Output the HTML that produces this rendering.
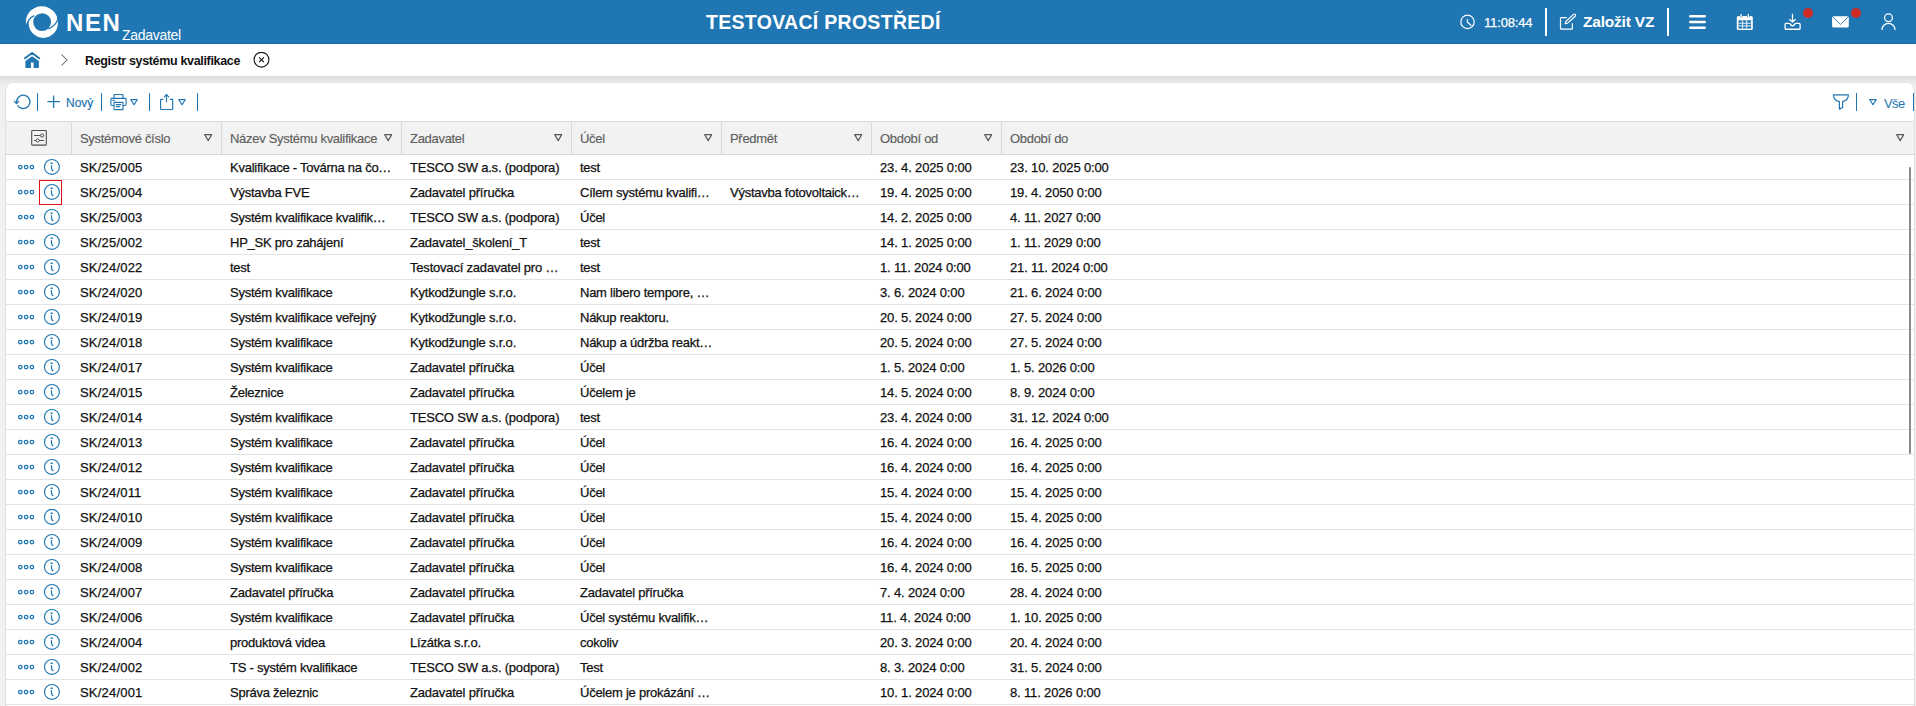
<!DOCTYPE html>
<html><head><meta charset="utf-8"><title>NEN</title>
<style>
*{margin:0;padding:0;box-sizing:border-box}
html,body{width:1916px;height:706px;overflow:hidden;background:#f1f1f1;font-family:"Liberation Sans",sans-serif}
#top{position:absolute;left:0;top:0;width:1916px;height:44px;background:#1f76b3;color:#fff}
#top::after{content:"";position:absolute;left:0;right:0;bottom:0;height:2px;background:linear-gradient(#1f76b3,#176aad)}
.abs{position:absolute}
#crumb{position:absolute;left:0;top:44px;width:1916px;height:32px;background:#fff}
#shade{position:absolute;left:0;top:76px;width:1916px;height:10px;background:linear-gradient(#dedede,#e7e7e7 50%,#f1f1f1)}
#panel{position:absolute;left:5px;top:82px;width:1910px;height:640px;background:#fff;border-radius:8px 8px 0 0;border-right:1px solid #e0e0e0;border-left:1px solid #e0e0e0;border-top:1px solid #e9e9e9}
.tsep{position:absolute;top:93px;width:1px;height:18px;background:#1f76b3}
#thead{position:absolute;left:6px;top:121px;width:1908px;height:34px;background:#f2f2f2;border-top:1px solid #dddddd;border-bottom:1px solid #d6d6d6}
.h{position:absolute;top:131px;font-size:13px;color:#5e5e5e;line-height:16px;white-space:nowrap;letter-spacing:-0.3px;-webkit-text-stroke:0.15px #5e5e5e}
.tri{position:absolute;top:134px}
.vsep{position:absolute;top:122px;width:1px;height:32px;background:#d9d9d9}
.row{position:absolute;left:6px;width:1908px;height:25px;border-bottom:1px solid #e3e3e3}
.row .c{position:absolute;top:1px;line-height:24px;font-size:13px;color:#111;white-space:nowrap;margin-left:-6px;letter-spacing:-0.2px;-webkit-text-stroke:0.25px #111}
.row .dots{position:absolute;left:12px;top:8px;width:18px;height:8px}
.row .dots svg,.row .info svg{display:block}
.row .info{position:absolute;left:37px;top:3px;width:18px;height:18px}
#redbox{position:absolute;left:39px;top:180px;width:23px;height:25px;border:1.5px solid #e3101a}
#scroll{position:absolute;left:1909px;top:167px;width:2px;height:287px;background:#8a8a8a;border-radius:1px}
</style></head><body>
<div id="top">
  <svg class="abs" style="left:20px;top:0" width="44" height="44" viewBox="20 0 44 44">
    <defs>
    <clipPath id="ct"><path d="M20 0 H64 V14 L58.6 15.5 Q57.6 25 48.5 28.8 L34.2 15.7 Q27.3 18.5 25.9 28.5 L25.7 32 H20 Z"/></clipPath>
    <clipPath id="cb"><path d="M20 44 H64 V14 L58.6 15.5 Q57.6 25 48.5 28.8 L34.2 15.7 Q27.3 18.5 25.9 28.5 L25.7 32 H20 Z"/></clipPath>
    </defs>
    <circle cx="41.8" cy="22.1" r="15.95" fill="#fff" clip-path="url(#ct)"/>
    <circle cx="43.3" cy="23.3" r="14.6" fill="#fff" clip-path="url(#cb)"/>
    <circle cx="42.1" cy="22.1" r="8.9" fill="#1f76b3"/>
    <path d="M25.7 32 L25.9 28.5 Q27.3 18.5 34.2 15.7" fill="none" stroke="#1f76b3" stroke-width="1.3"/>
    <path d="M64 14 L58.6 15.5 Q57.6 25 48.5 28.8" fill="none" stroke="#1f76b3" stroke-width="1.3"/>
  </svg>
  <div class="abs" style="left:66px;top:10px;font-size:24px;font-weight:bold;letter-spacing:1.6px;line-height:26px">NEN</div>
  <div class="abs" style="left:122px;top:27px;font-size:14px;line-height:16px;letter-spacing:-0.3px">Zadavatel</div>
  <div class="abs" style="left:706px;top:10px;font-size:19.5px;font-weight:bold;letter-spacing:0.3px;line-height:24px">TESTOVACÍ PROSTŘEDÍ</div>
  <svg class="abs" style="left:1459px;top:14px" width="17" height="17" viewBox="0 0 17 17"><circle cx="8.5" cy="7.9" r="6.7" fill="none" stroke="#fff" stroke-width="1.2"/><path d="M8.3 5.2 V8 L12.1 11.5" fill="none" stroke="#fff" stroke-width="1.1" stroke-linecap="round" stroke-linejoin="round"/></svg>
  <div class="abs" style="left:1484px;top:15px;font-size:13px;line-height:16px;letter-spacing:-0.15px;-webkit-text-stroke:0.25px #fff">11:08:44</div>
  <div class="abs" style="left:1545px;top:8px;width:2px;height:28px;background:#fff"></div>
  <svg class="abs" style="left:1559px;top:13px" width="18" height="18" viewBox="0 0 18 18"><path d="M7.7 4.6 H2.2 Q1.5 4.6 1.5 5.3 V15.5 Q1.5 16.2 2.2 16.2 H12.7 Q13.4 16.2 13.4 15.5 V10.3" fill="none" stroke="#fff" stroke-width="1.2" stroke-linejoin="round"/><path d="M6.2 10.7 L6.8 8.5 L14.5 1.4 Q15.4 0.6 16.2 1.4 Q17 2.3 16.2 3.2 L8.5 10.2 Z" fill="none" stroke="#fff" stroke-width="1.15" stroke-linejoin="round"/></svg>
  <div class="abs" style="left:1583px;top:13px;font-size:15.5px;font-weight:bold;line-height:18px;letter-spacing:-0.2px">Založit VZ</div>
  <div class="abs" style="left:1667px;top:8px;width:2px;height:28px;background:#fff"></div>
  <svg class="abs" style="left:1689px;top:14px" width="17" height="16" viewBox="0 0 17 16"><g stroke="#fff" stroke-width="2.4" stroke-linecap="round"><path d="M1.3 2.2 H15.7"/><path d="M1.3 8 H15.7"/><path d="M1.3 13.8 H15.7"/></g></svg>
  <svg class="abs" style="left:1736px;top:13px" width="18" height="18" viewBox="0 0 18 18"><rect x="0.8" y="2.9" width="16" height="14.1" rx="1.6" fill="#fff"/><rect x="2.5" y="7.3" width="12.6" height="8.3" fill="#1f76b3"/><g stroke="#fff" stroke-width="0.9"><path d="M6.6 7.3 V15.6 M10.7 7.3 V15.6 M2.5 10.2 H15.1 M2.5 12.9 H15.1"/></g><g stroke="#1f76b3" stroke-width="2.6"><path d="M5.1 0.6 V4.2 M12.3 0.6 V4.2"/></g><g stroke="#fff" stroke-width="1.3"><path d="M5.1 1 V4.6 M12.3 1 V4.6"/></g></svg>
  <svg class="abs" style="left:1784px;top:13px" width="18" height="18" viewBox="0 0 18 18"><g fill="none" stroke="#fff" stroke-width="1.3" stroke-linejoin="round" stroke-linecap="round"><path d="M8.5 1.2 V8.8 M5.6 6.6 L8.5 9 L11.4 6.6"/><path d="M1.9 10.3 H4.8 Q5.9 10.3 6.5 11.4 Q7.3 12.9 8.5 12.9 Q9.7 12.9 10.5 11.4 Q11.1 10.3 12.2 10.3 H15.1 Q16.1 10.3 16.1 11.3 V15.6 Q16.1 16.4 15.3 16.4 H1.9 Q1.1 16.4 1.1 15.6 V11.3 Q1.1 10.3 1.9 10.3 Z"/></g><path d="M1.6 16.2 H15.6" stroke="#fff" stroke-width="1.2" opacity="0.8"/></svg>
  <div class="abs" style="left:1803px;top:8px;width:10px;height:10px;border-radius:50%;background:#cf2a2a"></div>
  <svg class="abs" style="left:1832px;top:16px" width="17" height="12" viewBox="0 0 17 12"><rect x="0.1" y="0.2" width="16.7" height="11.4" rx="1.5" fill="#fff"/><path d="M0.7 0.9 L8.45 8.5 L16.2 0.9" fill="none" stroke="#1f76b3" stroke-width="0.9"/></svg>
  <div class="abs" style="left:1851px;top:8px;width:10px;height:10px;border-radius:50%;background:#cf2a2a"></div>
  <svg class="abs" style="left:1880px;top:13px" width="17" height="18" viewBox="0 0 17 18"><circle cx="8.5" cy="4.8" r="3.9" fill="none" stroke="#fff" stroke-width="1.25"/><path d="M1.9 16.9 A6.6 6.6 0 0 1 15.1 16.9" fill="none" stroke="#fff" stroke-width="1.25"/></svg>
</div>
<div id="crumb">
  <svg class="abs" style="left:24px;top:8px" width="17" height="17" viewBox="0 0 17 17"><path d="M0.9 6.2 L8.1 0.9 L15.2 6.2" fill="none" stroke="#1f76b3" stroke-width="1.9" stroke-linecap="round" stroke-linejoin="round"/><path d="M8.1 4.2 L1.4 8.9 V15 Q1.4 15.9 2.3 15.9 H6.9 V10.6 H9.6 V15.9 H14 Q14.9 15.9 14.9 15 V8.9 Z" fill="#1f76b3"/></svg>
  <svg class="abs" style="left:60px;top:9px" width="9" height="14" viewBox="0 0 9 14"><path d="M1.5 1.5 L7 7 L1.5 12.5" fill="none" stroke="#666" stroke-width="1.05"/></svg>
  <div class="abs" style="left:85px;top:9px;font-size:12.5px;font-weight:bold;color:#111;line-height:16px;letter-spacing:-0.33px">Registr systému kvalifikace</div>
  <svg class="abs" style="left:253px;top:8px" width="17" height="17" viewBox="0 0 17 17"><circle cx="8.5" cy="7.7" r="7.4" fill="none" stroke="#1a1a1a" stroke-width="1.15"/><path d="M6.1 5.3 L10.9 10.1 M10.9 5.3 L6.1 10.1" stroke="#1a1a1a" stroke-width="1.15"/></svg>
</div>
<div id="shade"></div>
<div id="panel"></div>
<svg class="abs" style="left:14px;top:94px" width="18" height="16" viewBox="0 0 18 16"><path d="M2.65 7.9 A6.65 6.65 0 1 1 3.54 11.2" fill="none" stroke="#1f76b3" stroke-width="1.3"/><path d="M0.4 7.3 L2.5 9.5 L4.6 7.4" fill="none" stroke="#1f76b3" stroke-width="1.3" stroke-linejoin="round" stroke-linecap="round"/></svg>
<div class="tsep" style="left:37px;width:1.2px"></div>
<svg class="abs" style="left:47px;top:95px" width="14" height="14" viewBox="0 0 14 14"><path d="M6.6 0.5 V13 M0.4 6.7 H13" stroke="#1f76b3" stroke-width="1.3"/></svg>
<div class="abs" style="left:66px;top:95px;font-size:12px;color:#1f76b3;line-height:16px;-webkit-text-stroke:0.2px #1f76b3">Nový</div>
<div class="tsep" style="left:101px;width:1.2px"></div>
<svg class="abs" style="left:110px;top:94px" width="17" height="17" viewBox="0 0 17 17"><g fill="none" stroke="#1f76b3" stroke-width="1.15" stroke-linejoin="round"><path d="M4 4.3 V1.3 Q4 0.4 4.9 0.4 H12.1 Q13 0.4 13 1.3 V4.3"/><path d="M4 11.5 H1.8 Q0.9 11.5 0.9 10.6 V5.2 Q0.9 4.3 1.8 4.3 H15.2 Q16.1 4.3 16.1 5.2 V10.6 Q16.1 11.5 15.2 11.5 H13"/><rect x="4" y="8.4" width="9" height="7.2" rx="0.6"/><path d="M6.3 10.6 H10.8 M6.3 12.6 H9.7 M3 6.4 H4.4" stroke-linecap="round"/></g></svg>
<svg class="abs" style="left:130px;top:99px" width="8" height="7" viewBox="0 0 8 7"><path d="M0.8 0.7 H7.2 L4 5.8 Z" fill="none" stroke="#1f76b3" stroke-width="1.2" stroke-linejoin="round"/></svg>
<div class="tsep" style="left:149px;width:1.2px"></div>
<svg class="abs" style="left:160px;top:94px" width="15" height="17" viewBox="0 0 15 17"><g fill="none" stroke="#1f76b3" stroke-width="1.15" stroke-linejoin="round" stroke-linecap="round"><path d="M2.8 5.4 H1.4 Q0.6 5.4 0.6 6.2 V14.7 Q0.6 15.5 1.4 15.5 H11.9 Q12.7 15.5 12.7 14.7 V6.2 Q12.7 5.4 11.9 5.4 H10.3"/><path d="M6.5 7.7 V0.8"/><path d="M4.3 2.9 L6.5 0.6 L8.7 2.9"/></g></svg>
<svg class="abs" style="left:178px;top:99px" width="8" height="7" viewBox="0 0 8 7"><path d="M0.8 0.7 H7.2 L4 5.8 Z" fill="none" stroke="#1f76b3" stroke-width="1.2" stroke-linejoin="round"/></svg>
<div class="tsep" style="left:197px;width:1.2px"></div>
<svg class="abs" style="left:1832px;top:93px" width="18" height="18" viewBox="0 0 18 18"><path d="M1.4 1.8 H16.4 C16.4 6 13.2 8 10.6 8.7 V14.5 L7.4 16.1 V8.7 C4.6 8 1.4 6 1.4 1.8 Z" fill="none" stroke="#1f76b3" stroke-width="1.2" stroke-linejoin="round"/></svg>
<div class="tsep" style="left:1856px;width:1.2px"></div>
<svg class="abs" style="left:1869px;top:99px" width="8" height="7" viewBox="0 0 8 7"><path d="M0.8 0.7 H7.2 L4 5.8 Z" fill="none" stroke="#1f76b3" stroke-width="1.2" stroke-linejoin="round"/></svg>
<div class="abs" style="left:1884px;top:96px;font-size:13px;color:#1f76b3;line-height:16px;letter-spacing:-0.6px">Vše</div>
<div class="tsep" style="left:1913px;width:1.2px"></div>
<div id="thead"></div>
<svg class="abs" style="left:30px;top:129px" width="18" height="18" viewBox="0 0 18 18"><rect x="1.7" y="1.5" width="14.6" height="14.6" rx="0.6" fill="none" stroke="#505050" stroke-width="1.1"/><path d="M4 6.5 H14 M4 11.5 H14" stroke="#505050" stroke-width="1"/><circle cx="12.1" cy="6.5" r="1.6" fill="#f2f2f2" stroke="#505050" stroke-width="1"/><circle cx="7.7" cy="11.5" r="1.6" fill="#f2f2f2" stroke="#505050" stroke-width="1"/></svg>
<div class="vsep" style="left:71px"></div><div class="vsep" style="left:221px"></div><div class="vsep" style="left:401px"></div><div class="vsep" style="left:571px"></div><div class="vsep" style="left:721px"></div><div class="vsep" style="left:871px"></div><div class="vsep" style="left:1001px"></div>
<div class="h" style="left:80px">Systémové číslo</div><svg class="tri" style="left:204px" width="9" height="8" viewBox="0 0 9 8"><path d="M0.7 0.6 H7.7 L4.2 6.6 Z" fill="none" stroke="#555" stroke-width="1.1" stroke-linejoin="round"/></svg><div class="h" style="left:230px">Název Systému kvalifikace</div><svg class="tri" style="left:384px" width="9" height="8" viewBox="0 0 9 8"><path d="M0.7 0.6 H7.7 L4.2 6.6 Z" fill="none" stroke="#555" stroke-width="1.1" stroke-linejoin="round"/></svg><div class="h" style="left:410px">Zadavatel</div><svg class="tri" style="left:554px" width="9" height="8" viewBox="0 0 9 8"><path d="M0.7 0.6 H7.7 L4.2 6.6 Z" fill="none" stroke="#555" stroke-width="1.1" stroke-linejoin="round"/></svg><div class="h" style="left:580px">Účel</div><svg class="tri" style="left:704px" width="9" height="8" viewBox="0 0 9 8"><path d="M0.7 0.6 H7.7 L4.2 6.6 Z" fill="none" stroke="#555" stroke-width="1.1" stroke-linejoin="round"/></svg><div class="h" style="left:730px">Předmět</div><svg class="tri" style="left:854px" width="9" height="8" viewBox="0 0 9 8"><path d="M0.7 0.6 H7.7 L4.2 6.6 Z" fill="none" stroke="#555" stroke-width="1.1" stroke-linejoin="round"/></svg><div class="h" style="left:880px">Období od</div><svg class="tri" style="left:984px" width="9" height="8" viewBox="0 0 9 8"><path d="M0.7 0.6 H7.7 L4.2 6.6 Z" fill="none" stroke="#555" stroke-width="1.1" stroke-linejoin="round"/></svg><div class="h" style="left:1010px">Období do</div><svg class="tri" style="left:1896px" width="9" height="8" viewBox="0 0 9 8"><path d="M0.7 0.6 H7.7 L4.2 6.6 Z" fill="none" stroke="#555" stroke-width="1.1" stroke-linejoin="round"/></svg>
<div class="row" style="top:155px"><div class="dots"><svg width="18" height="8" viewBox="0 0 18 8"><g fill="none" stroke="#1f76b3" stroke-width="1.25"><circle cx="2.3" cy="4" r="1.75"/><circle cx="8.1" cy="4" r="1.75"/><circle cx="13.9" cy="4" r="1.75"/></g></svg></div><div class="info"><svg width="18" height="18" viewBox="0 0 18 18"><circle cx="8.9" cy="8.9" r="7.45" fill="none" stroke="#1f76b3" stroke-width="1.15"/><path d="M8.1 5.3 H9.1" stroke="#1f76b3" stroke-width="1.5" stroke-linecap="round"/><path d="M8.4 7.5 L8.6 10.6 Q8.8 12 9.9 12.6" fill="none" stroke="#1f76b3" stroke-width="1.2" stroke-linecap="round"/></svg></div><div class="c" style="left:80px;letter-spacing:0.2px">SK/25/005</div><div class="c" style="left:230px;letter-spacing:-0.25px">Kvalifikace - Továrna na čo…</div><div class="c" style="left:410px;letter-spacing:-0.2px">TESCO SW a.s. (podpora)</div><div class="c" style="left:580px;letter-spacing:-0.25px">test</div><div class="c" style="left:880px;letter-spacing:-0.15px">23. 4. 2025 0:00</div><div class="c" style="left:1010px;letter-spacing:-0.15px">23. 10. 2025 0:00</div></div><div class="row" style="top:180px"><div class="dots"><svg width="18" height="8" viewBox="0 0 18 8"><g fill="none" stroke="#1f76b3" stroke-width="1.25"><circle cx="2.3" cy="4" r="1.75"/><circle cx="8.1" cy="4" r="1.75"/><circle cx="13.9" cy="4" r="1.75"/></g></svg></div><div class="info"><svg width="18" height="18" viewBox="0 0 18 18"><circle cx="8.9" cy="8.9" r="7.45" fill="none" stroke="#1f76b3" stroke-width="1.15"/><path d="M8.1 5.3 H9.1" stroke="#1f76b3" stroke-width="1.5" stroke-linecap="round"/><path d="M8.4 7.5 L8.6 10.6 Q8.8 12 9.9 12.6" fill="none" stroke="#1f76b3" stroke-width="1.2" stroke-linecap="round"/></svg></div><div class="c" style="left:80px;letter-spacing:0.2px">SK/25/004</div><div class="c" style="left:230px;letter-spacing:-0.25px">Výstavba FVE</div><div class="c" style="left:410px;letter-spacing:-0.2px">Zadavatel příručka</div><div class="c" style="left:580px;letter-spacing:-0.25px">Cílem systému kvalifi…</div><div class="c" style="left:730px;letter-spacing:-0.25px">Výstavba fotovoltaick…</div><div class="c" style="left:880px;letter-spacing:-0.15px">19. 4. 2025 0:00</div><div class="c" style="left:1010px;letter-spacing:-0.15px">19. 4. 2050 0:00</div></div><div class="row" style="top:205px"><div class="dots"><svg width="18" height="8" viewBox="0 0 18 8"><g fill="none" stroke="#1f76b3" stroke-width="1.25"><circle cx="2.3" cy="4" r="1.75"/><circle cx="8.1" cy="4" r="1.75"/><circle cx="13.9" cy="4" r="1.75"/></g></svg></div><div class="info"><svg width="18" height="18" viewBox="0 0 18 18"><circle cx="8.9" cy="8.9" r="7.45" fill="none" stroke="#1f76b3" stroke-width="1.15"/><path d="M8.1 5.3 H9.1" stroke="#1f76b3" stroke-width="1.5" stroke-linecap="round"/><path d="M8.4 7.5 L8.6 10.6 Q8.8 12 9.9 12.6" fill="none" stroke="#1f76b3" stroke-width="1.2" stroke-linecap="round"/></svg></div><div class="c" style="left:80px;letter-spacing:0.2px">SK/25/003</div><div class="c" style="left:230px;letter-spacing:-0.25px">Systém kvalifikace kvalifik…</div><div class="c" style="left:410px;letter-spacing:-0.2px">TESCO SW a.s. (podpora)</div><div class="c" style="left:580px;letter-spacing:-0.25px">Účel</div><div class="c" style="left:880px;letter-spacing:-0.15px">14. 2. 2025 0:00</div><div class="c" style="left:1010px;letter-spacing:-0.15px">4. 11. 2027 0:00</div></div><div class="row" style="top:230px"><div class="dots"><svg width="18" height="8" viewBox="0 0 18 8"><g fill="none" stroke="#1f76b3" stroke-width="1.25"><circle cx="2.3" cy="4" r="1.75"/><circle cx="8.1" cy="4" r="1.75"/><circle cx="13.9" cy="4" r="1.75"/></g></svg></div><div class="info"><svg width="18" height="18" viewBox="0 0 18 18"><circle cx="8.9" cy="8.9" r="7.45" fill="none" stroke="#1f76b3" stroke-width="1.15"/><path d="M8.1 5.3 H9.1" stroke="#1f76b3" stroke-width="1.5" stroke-linecap="round"/><path d="M8.4 7.5 L8.6 10.6 Q8.8 12 9.9 12.6" fill="none" stroke="#1f76b3" stroke-width="1.2" stroke-linecap="round"/></svg></div><div class="c" style="left:80px;letter-spacing:0.2px">SK/25/002</div><div class="c" style="left:230px;letter-spacing:-0.25px">HP_SK pro zahájení</div><div class="c" style="left:410px;letter-spacing:-0.2px">Zadavatel_školení_T</div><div class="c" style="left:580px;letter-spacing:-0.25px">test</div><div class="c" style="left:880px;letter-spacing:-0.15px">14. 1. 2025 0:00</div><div class="c" style="left:1010px;letter-spacing:-0.15px">1. 11. 2029 0:00</div></div><div class="row" style="top:255px"><div class="dots"><svg width="18" height="8" viewBox="0 0 18 8"><g fill="none" stroke="#1f76b3" stroke-width="1.25"><circle cx="2.3" cy="4" r="1.75"/><circle cx="8.1" cy="4" r="1.75"/><circle cx="13.9" cy="4" r="1.75"/></g></svg></div><div class="info"><svg width="18" height="18" viewBox="0 0 18 18"><circle cx="8.9" cy="8.9" r="7.45" fill="none" stroke="#1f76b3" stroke-width="1.15"/><path d="M8.1 5.3 H9.1" stroke="#1f76b3" stroke-width="1.5" stroke-linecap="round"/><path d="M8.4 7.5 L8.6 10.6 Q8.8 12 9.9 12.6" fill="none" stroke="#1f76b3" stroke-width="1.2" stroke-linecap="round"/></svg></div><div class="c" style="left:80px;letter-spacing:0.2px">SK/24/022</div><div class="c" style="left:230px;letter-spacing:-0.25px">test</div><div class="c" style="left:410px;letter-spacing:-0.2px">Testovací zadavatel pro …</div><div class="c" style="left:580px;letter-spacing:-0.25px">test</div><div class="c" style="left:880px;letter-spacing:-0.15px">1. 11. 2024 0:00</div><div class="c" style="left:1010px;letter-spacing:-0.15px">21. 11. 2024 0:00</div></div><div class="row" style="top:280px"><div class="dots"><svg width="18" height="8" viewBox="0 0 18 8"><g fill="none" stroke="#1f76b3" stroke-width="1.25"><circle cx="2.3" cy="4" r="1.75"/><circle cx="8.1" cy="4" r="1.75"/><circle cx="13.9" cy="4" r="1.75"/></g></svg></div><div class="info"><svg width="18" height="18" viewBox="0 0 18 18"><circle cx="8.9" cy="8.9" r="7.45" fill="none" stroke="#1f76b3" stroke-width="1.15"/><path d="M8.1 5.3 H9.1" stroke="#1f76b3" stroke-width="1.5" stroke-linecap="round"/><path d="M8.4 7.5 L8.6 10.6 Q8.8 12 9.9 12.6" fill="none" stroke="#1f76b3" stroke-width="1.2" stroke-linecap="round"/></svg></div><div class="c" style="left:80px;letter-spacing:0.2px">SK/24/020</div><div class="c" style="left:230px;letter-spacing:-0.25px">Systém kvalifikace</div><div class="c" style="left:410px;letter-spacing:-0.2px">Kytkodžungle s.r.o.</div><div class="c" style="left:580px;letter-spacing:-0.25px">Nam libero tempore, …</div><div class="c" style="left:880px;letter-spacing:-0.15px">3. 6. 2024 0:00</div><div class="c" style="left:1010px;letter-spacing:-0.15px">21. 6. 2024 0:00</div></div><div class="row" style="top:305px"><div class="dots"><svg width="18" height="8" viewBox="0 0 18 8"><g fill="none" stroke="#1f76b3" stroke-width="1.25"><circle cx="2.3" cy="4" r="1.75"/><circle cx="8.1" cy="4" r="1.75"/><circle cx="13.9" cy="4" r="1.75"/></g></svg></div><div class="info"><svg width="18" height="18" viewBox="0 0 18 18"><circle cx="8.9" cy="8.9" r="7.45" fill="none" stroke="#1f76b3" stroke-width="1.15"/><path d="M8.1 5.3 H9.1" stroke="#1f76b3" stroke-width="1.5" stroke-linecap="round"/><path d="M8.4 7.5 L8.6 10.6 Q8.8 12 9.9 12.6" fill="none" stroke="#1f76b3" stroke-width="1.2" stroke-linecap="round"/></svg></div><div class="c" style="left:80px;letter-spacing:0.2px">SK/24/019</div><div class="c" style="left:230px;letter-spacing:-0.25px">Systém kvalifikace veřejný</div><div class="c" style="left:410px;letter-spacing:-0.2px">Kytkodžungle s.r.o.</div><div class="c" style="left:580px;letter-spacing:-0.25px">Nákup reaktoru.</div><div class="c" style="left:880px;letter-spacing:-0.15px">20. 5. 2024 0:00</div><div class="c" style="left:1010px;letter-spacing:-0.15px">27. 5. 2024 0:00</div></div><div class="row" style="top:330px"><div class="dots"><svg width="18" height="8" viewBox="0 0 18 8"><g fill="none" stroke="#1f76b3" stroke-width="1.25"><circle cx="2.3" cy="4" r="1.75"/><circle cx="8.1" cy="4" r="1.75"/><circle cx="13.9" cy="4" r="1.75"/></g></svg></div><div class="info"><svg width="18" height="18" viewBox="0 0 18 18"><circle cx="8.9" cy="8.9" r="7.45" fill="none" stroke="#1f76b3" stroke-width="1.15"/><path d="M8.1 5.3 H9.1" stroke="#1f76b3" stroke-width="1.5" stroke-linecap="round"/><path d="M8.4 7.5 L8.6 10.6 Q8.8 12 9.9 12.6" fill="none" stroke="#1f76b3" stroke-width="1.2" stroke-linecap="round"/></svg></div><div class="c" style="left:80px;letter-spacing:0.2px">SK/24/018</div><div class="c" style="left:230px;letter-spacing:-0.25px">Systém kvalifikace</div><div class="c" style="left:410px;letter-spacing:-0.2px">Kytkodžungle s.r.o.</div><div class="c" style="left:580px;letter-spacing:-0.25px">Nákup a údržba reakt…</div><div class="c" style="left:880px;letter-spacing:-0.15px">20. 5. 2024 0:00</div><div class="c" style="left:1010px;letter-spacing:-0.15px">27. 5. 2024 0:00</div></div><div class="row" style="top:355px"><div class="dots"><svg width="18" height="8" viewBox="0 0 18 8"><g fill="none" stroke="#1f76b3" stroke-width="1.25"><circle cx="2.3" cy="4" r="1.75"/><circle cx="8.1" cy="4" r="1.75"/><circle cx="13.9" cy="4" r="1.75"/></g></svg></div><div class="info"><svg width="18" height="18" viewBox="0 0 18 18"><circle cx="8.9" cy="8.9" r="7.45" fill="none" stroke="#1f76b3" stroke-width="1.15"/><path d="M8.1 5.3 H9.1" stroke="#1f76b3" stroke-width="1.5" stroke-linecap="round"/><path d="M8.4 7.5 L8.6 10.6 Q8.8 12 9.9 12.6" fill="none" stroke="#1f76b3" stroke-width="1.2" stroke-linecap="round"/></svg></div><div class="c" style="left:80px;letter-spacing:0.2px">SK/24/017</div><div class="c" style="left:230px;letter-spacing:-0.25px">Systém kvalifikace</div><div class="c" style="left:410px;letter-spacing:-0.2px">Zadavatel příručka</div><div class="c" style="left:580px;letter-spacing:-0.25px">Účel</div><div class="c" style="left:880px;letter-spacing:-0.15px">1. 5. 2024 0:00</div><div class="c" style="left:1010px;letter-spacing:-0.15px">1. 5. 2026 0:00</div></div><div class="row" style="top:380px"><div class="dots"><svg width="18" height="8" viewBox="0 0 18 8"><g fill="none" stroke="#1f76b3" stroke-width="1.25"><circle cx="2.3" cy="4" r="1.75"/><circle cx="8.1" cy="4" r="1.75"/><circle cx="13.9" cy="4" r="1.75"/></g></svg></div><div class="info"><svg width="18" height="18" viewBox="0 0 18 18"><circle cx="8.9" cy="8.9" r="7.45" fill="none" stroke="#1f76b3" stroke-width="1.15"/><path d="M8.1 5.3 H9.1" stroke="#1f76b3" stroke-width="1.5" stroke-linecap="round"/><path d="M8.4 7.5 L8.6 10.6 Q8.8 12 9.9 12.6" fill="none" stroke="#1f76b3" stroke-width="1.2" stroke-linecap="round"/></svg></div><div class="c" style="left:80px;letter-spacing:0.2px">SK/24/015</div><div class="c" style="left:230px;letter-spacing:-0.25px">Železnice</div><div class="c" style="left:410px;letter-spacing:-0.2px">Zadavatel příručka</div><div class="c" style="left:580px;letter-spacing:-0.25px">Účelem je</div><div class="c" style="left:880px;letter-spacing:-0.15px">14. 5. 2024 0:00</div><div class="c" style="left:1010px;letter-spacing:-0.15px">8. 9. 2024 0:00</div></div><div class="row" style="top:405px"><div class="dots"><svg width="18" height="8" viewBox="0 0 18 8"><g fill="none" stroke="#1f76b3" stroke-width="1.25"><circle cx="2.3" cy="4" r="1.75"/><circle cx="8.1" cy="4" r="1.75"/><circle cx="13.9" cy="4" r="1.75"/></g></svg></div><div class="info"><svg width="18" height="18" viewBox="0 0 18 18"><circle cx="8.9" cy="8.9" r="7.45" fill="none" stroke="#1f76b3" stroke-width="1.15"/><path d="M8.1 5.3 H9.1" stroke="#1f76b3" stroke-width="1.5" stroke-linecap="round"/><path d="M8.4 7.5 L8.6 10.6 Q8.8 12 9.9 12.6" fill="none" stroke="#1f76b3" stroke-width="1.2" stroke-linecap="round"/></svg></div><div class="c" style="left:80px;letter-spacing:0.2px">SK/24/014</div><div class="c" style="left:230px;letter-spacing:-0.25px">Systém kvalifikace</div><div class="c" style="left:410px;letter-spacing:-0.2px">TESCO SW a.s. (podpora)</div><div class="c" style="left:580px;letter-spacing:-0.25px">test</div><div class="c" style="left:880px;letter-spacing:-0.15px">23. 4. 2024 0:00</div><div class="c" style="left:1010px;letter-spacing:-0.15px">31. 12. 2024 0:00</div></div><div class="row" style="top:430px"><div class="dots"><svg width="18" height="8" viewBox="0 0 18 8"><g fill="none" stroke="#1f76b3" stroke-width="1.25"><circle cx="2.3" cy="4" r="1.75"/><circle cx="8.1" cy="4" r="1.75"/><circle cx="13.9" cy="4" r="1.75"/></g></svg></div><div class="info"><svg width="18" height="18" viewBox="0 0 18 18"><circle cx="8.9" cy="8.9" r="7.45" fill="none" stroke="#1f76b3" stroke-width="1.15"/><path d="M8.1 5.3 H9.1" stroke="#1f76b3" stroke-width="1.5" stroke-linecap="round"/><path d="M8.4 7.5 L8.6 10.6 Q8.8 12 9.9 12.6" fill="none" stroke="#1f76b3" stroke-width="1.2" stroke-linecap="round"/></svg></div><div class="c" style="left:80px;letter-spacing:0.2px">SK/24/013</div><div class="c" style="left:230px;letter-spacing:-0.25px">Systém kvalifikace</div><div class="c" style="left:410px;letter-spacing:-0.2px">Zadavatel příručka</div><div class="c" style="left:580px;letter-spacing:-0.25px">Účel</div><div class="c" style="left:880px;letter-spacing:-0.15px">16. 4. 2024 0:00</div><div class="c" style="left:1010px;letter-spacing:-0.15px">16. 4. 2025 0:00</div></div><div class="row" style="top:455px"><div class="dots"><svg width="18" height="8" viewBox="0 0 18 8"><g fill="none" stroke="#1f76b3" stroke-width="1.25"><circle cx="2.3" cy="4" r="1.75"/><circle cx="8.1" cy="4" r="1.75"/><circle cx="13.9" cy="4" r="1.75"/></g></svg></div><div class="info"><svg width="18" height="18" viewBox="0 0 18 18"><circle cx="8.9" cy="8.9" r="7.45" fill="none" stroke="#1f76b3" stroke-width="1.15"/><path d="M8.1 5.3 H9.1" stroke="#1f76b3" stroke-width="1.5" stroke-linecap="round"/><path d="M8.4 7.5 L8.6 10.6 Q8.8 12 9.9 12.6" fill="none" stroke="#1f76b3" stroke-width="1.2" stroke-linecap="round"/></svg></div><div class="c" style="left:80px;letter-spacing:0.2px">SK/24/012</div><div class="c" style="left:230px;letter-spacing:-0.25px">Systém kvalifikace</div><div class="c" style="left:410px;letter-spacing:-0.2px">Zadavatel příručka</div><div class="c" style="left:580px;letter-spacing:-0.25px">Účel</div><div class="c" style="left:880px;letter-spacing:-0.15px">16. 4. 2024 0:00</div><div class="c" style="left:1010px;letter-spacing:-0.15px">16. 4. 2025 0:00</div></div><div class="row" style="top:480px"><div class="dots"><svg width="18" height="8" viewBox="0 0 18 8"><g fill="none" stroke="#1f76b3" stroke-width="1.25"><circle cx="2.3" cy="4" r="1.75"/><circle cx="8.1" cy="4" r="1.75"/><circle cx="13.9" cy="4" r="1.75"/></g></svg></div><div class="info"><svg width="18" height="18" viewBox="0 0 18 18"><circle cx="8.9" cy="8.9" r="7.45" fill="none" stroke="#1f76b3" stroke-width="1.15"/><path d="M8.1 5.3 H9.1" stroke="#1f76b3" stroke-width="1.5" stroke-linecap="round"/><path d="M8.4 7.5 L8.6 10.6 Q8.8 12 9.9 12.6" fill="none" stroke="#1f76b3" stroke-width="1.2" stroke-linecap="round"/></svg></div><div class="c" style="left:80px;letter-spacing:0.2px">SK/24/011</div><div class="c" style="left:230px;letter-spacing:-0.25px">Systém kvalifikace</div><div class="c" style="left:410px;letter-spacing:-0.2px">Zadavatel příručka</div><div class="c" style="left:580px;letter-spacing:-0.25px">Účel</div><div class="c" style="left:880px;letter-spacing:-0.15px">15. 4. 2024 0:00</div><div class="c" style="left:1010px;letter-spacing:-0.15px">15. 4. 2025 0:00</div></div><div class="row" style="top:505px"><div class="dots"><svg width="18" height="8" viewBox="0 0 18 8"><g fill="none" stroke="#1f76b3" stroke-width="1.25"><circle cx="2.3" cy="4" r="1.75"/><circle cx="8.1" cy="4" r="1.75"/><circle cx="13.9" cy="4" r="1.75"/></g></svg></div><div class="info"><svg width="18" height="18" viewBox="0 0 18 18"><circle cx="8.9" cy="8.9" r="7.45" fill="none" stroke="#1f76b3" stroke-width="1.15"/><path d="M8.1 5.3 H9.1" stroke="#1f76b3" stroke-width="1.5" stroke-linecap="round"/><path d="M8.4 7.5 L8.6 10.6 Q8.8 12 9.9 12.6" fill="none" stroke="#1f76b3" stroke-width="1.2" stroke-linecap="round"/></svg></div><div class="c" style="left:80px;letter-spacing:0.2px">SK/24/010</div><div class="c" style="left:230px;letter-spacing:-0.25px">Systém kvalifikace</div><div class="c" style="left:410px;letter-spacing:-0.2px">Zadavatel příručka</div><div class="c" style="left:580px;letter-spacing:-0.25px">Účel</div><div class="c" style="left:880px;letter-spacing:-0.15px">15. 4. 2024 0:00</div><div class="c" style="left:1010px;letter-spacing:-0.15px">15. 4. 2025 0:00</div></div><div class="row" style="top:530px"><div class="dots"><svg width="18" height="8" viewBox="0 0 18 8"><g fill="none" stroke="#1f76b3" stroke-width="1.25"><circle cx="2.3" cy="4" r="1.75"/><circle cx="8.1" cy="4" r="1.75"/><circle cx="13.9" cy="4" r="1.75"/></g></svg></div><div class="info"><svg width="18" height="18" viewBox="0 0 18 18"><circle cx="8.9" cy="8.9" r="7.45" fill="none" stroke="#1f76b3" stroke-width="1.15"/><path d="M8.1 5.3 H9.1" stroke="#1f76b3" stroke-width="1.5" stroke-linecap="round"/><path d="M8.4 7.5 L8.6 10.6 Q8.8 12 9.9 12.6" fill="none" stroke="#1f76b3" stroke-width="1.2" stroke-linecap="round"/></svg></div><div class="c" style="left:80px;letter-spacing:0.2px">SK/24/009</div><div class="c" style="left:230px;letter-spacing:-0.25px">Systém kvalifikace</div><div class="c" style="left:410px;letter-spacing:-0.2px">Zadavatel příručka</div><div class="c" style="left:580px;letter-spacing:-0.25px">Účel</div><div class="c" style="left:880px;letter-spacing:-0.15px">16. 4. 2024 0:00</div><div class="c" style="left:1010px;letter-spacing:-0.15px">16. 4. 2025 0:00</div></div><div class="row" style="top:555px"><div class="dots"><svg width="18" height="8" viewBox="0 0 18 8"><g fill="none" stroke="#1f76b3" stroke-width="1.25"><circle cx="2.3" cy="4" r="1.75"/><circle cx="8.1" cy="4" r="1.75"/><circle cx="13.9" cy="4" r="1.75"/></g></svg></div><div class="info"><svg width="18" height="18" viewBox="0 0 18 18"><circle cx="8.9" cy="8.9" r="7.45" fill="none" stroke="#1f76b3" stroke-width="1.15"/><path d="M8.1 5.3 H9.1" stroke="#1f76b3" stroke-width="1.5" stroke-linecap="round"/><path d="M8.4 7.5 L8.6 10.6 Q8.8 12 9.9 12.6" fill="none" stroke="#1f76b3" stroke-width="1.2" stroke-linecap="round"/></svg></div><div class="c" style="left:80px;letter-spacing:0.2px">SK/24/008</div><div class="c" style="left:230px;letter-spacing:-0.25px">System kvalifikace</div><div class="c" style="left:410px;letter-spacing:-0.2px">Zadavatel příručka</div><div class="c" style="left:580px;letter-spacing:-0.25px">Účel</div><div class="c" style="left:880px;letter-spacing:-0.15px">16. 4. 2024 0:00</div><div class="c" style="left:1010px;letter-spacing:-0.15px">16. 5. 2025 0:00</div></div><div class="row" style="top:580px"><div class="dots"><svg width="18" height="8" viewBox="0 0 18 8"><g fill="none" stroke="#1f76b3" stroke-width="1.25"><circle cx="2.3" cy="4" r="1.75"/><circle cx="8.1" cy="4" r="1.75"/><circle cx="13.9" cy="4" r="1.75"/></g></svg></div><div class="info"><svg width="18" height="18" viewBox="0 0 18 18"><circle cx="8.9" cy="8.9" r="7.45" fill="none" stroke="#1f76b3" stroke-width="1.15"/><path d="M8.1 5.3 H9.1" stroke="#1f76b3" stroke-width="1.5" stroke-linecap="round"/><path d="M8.4 7.5 L8.6 10.6 Q8.8 12 9.9 12.6" fill="none" stroke="#1f76b3" stroke-width="1.2" stroke-linecap="round"/></svg></div><div class="c" style="left:80px;letter-spacing:0.2px">SK/24/007</div><div class="c" style="left:230px;letter-spacing:-0.25px">Zadavatel příručka</div><div class="c" style="left:410px;letter-spacing:-0.2px">Zadavatel příručka</div><div class="c" style="left:580px;letter-spacing:-0.25px">Zadavatel příručka</div><div class="c" style="left:880px;letter-spacing:-0.15px">7. 4. 2024 0:00</div><div class="c" style="left:1010px;letter-spacing:-0.15px">28. 4. 2024 0:00</div></div><div class="row" style="top:605px"><div class="dots"><svg width="18" height="8" viewBox="0 0 18 8"><g fill="none" stroke="#1f76b3" stroke-width="1.25"><circle cx="2.3" cy="4" r="1.75"/><circle cx="8.1" cy="4" r="1.75"/><circle cx="13.9" cy="4" r="1.75"/></g></svg></div><div class="info"><svg width="18" height="18" viewBox="0 0 18 18"><circle cx="8.9" cy="8.9" r="7.45" fill="none" stroke="#1f76b3" stroke-width="1.15"/><path d="M8.1 5.3 H9.1" stroke="#1f76b3" stroke-width="1.5" stroke-linecap="round"/><path d="M8.4 7.5 L8.6 10.6 Q8.8 12 9.9 12.6" fill="none" stroke="#1f76b3" stroke-width="1.2" stroke-linecap="round"/></svg></div><div class="c" style="left:80px;letter-spacing:0.2px">SK/24/006</div><div class="c" style="left:230px;letter-spacing:-0.25px">Systém kvalifikace</div><div class="c" style="left:410px;letter-spacing:-0.2px">Zadavatel příručka</div><div class="c" style="left:580px;letter-spacing:-0.25px">Účel systému kvalifik…</div><div class="c" style="left:880px;letter-spacing:-0.15px">11. 4. 2024 0:00</div><div class="c" style="left:1010px;letter-spacing:-0.15px">1. 10. 2025 0:00</div></div><div class="row" style="top:630px"><div class="dots"><svg width="18" height="8" viewBox="0 0 18 8"><g fill="none" stroke="#1f76b3" stroke-width="1.25"><circle cx="2.3" cy="4" r="1.75"/><circle cx="8.1" cy="4" r="1.75"/><circle cx="13.9" cy="4" r="1.75"/></g></svg></div><div class="info"><svg width="18" height="18" viewBox="0 0 18 18"><circle cx="8.9" cy="8.9" r="7.45" fill="none" stroke="#1f76b3" stroke-width="1.15"/><path d="M8.1 5.3 H9.1" stroke="#1f76b3" stroke-width="1.5" stroke-linecap="round"/><path d="M8.4 7.5 L8.6 10.6 Q8.8 12 9.9 12.6" fill="none" stroke="#1f76b3" stroke-width="1.2" stroke-linecap="round"/></svg></div><div class="c" style="left:80px;letter-spacing:0.2px">SK/24/004</div><div class="c" style="left:230px;letter-spacing:-0.25px">produktová videa</div><div class="c" style="left:410px;letter-spacing:-0.2px">Lízátka s.r.o.</div><div class="c" style="left:580px;letter-spacing:-0.25px">cokoliv</div><div class="c" style="left:880px;letter-spacing:-0.15px">20. 3. 2024 0:00</div><div class="c" style="left:1010px;letter-spacing:-0.15px">20. 4. 2024 0:00</div></div><div class="row" style="top:655px"><div class="dots"><svg width="18" height="8" viewBox="0 0 18 8"><g fill="none" stroke="#1f76b3" stroke-width="1.25"><circle cx="2.3" cy="4" r="1.75"/><circle cx="8.1" cy="4" r="1.75"/><circle cx="13.9" cy="4" r="1.75"/></g></svg></div><div class="info"><svg width="18" height="18" viewBox="0 0 18 18"><circle cx="8.9" cy="8.9" r="7.45" fill="none" stroke="#1f76b3" stroke-width="1.15"/><path d="M8.1 5.3 H9.1" stroke="#1f76b3" stroke-width="1.5" stroke-linecap="round"/><path d="M8.4 7.5 L8.6 10.6 Q8.8 12 9.9 12.6" fill="none" stroke="#1f76b3" stroke-width="1.2" stroke-linecap="round"/></svg></div><div class="c" style="left:80px;letter-spacing:0.2px">SK/24/002</div><div class="c" style="left:230px;letter-spacing:-0.25px">TS - systém kvalifikace</div><div class="c" style="left:410px;letter-spacing:-0.2px">TESCO SW a.s. (podpora)</div><div class="c" style="left:580px;letter-spacing:-0.25px">Test</div><div class="c" style="left:880px;letter-spacing:-0.15px">8. 3. 2024 0:00</div><div class="c" style="left:1010px;letter-spacing:-0.15px">31. 5. 2024 0:00</div></div><div class="row" style="top:680px"><div class="dots"><svg width="18" height="8" viewBox="0 0 18 8"><g fill="none" stroke="#1f76b3" stroke-width="1.25"><circle cx="2.3" cy="4" r="1.75"/><circle cx="8.1" cy="4" r="1.75"/><circle cx="13.9" cy="4" r="1.75"/></g></svg></div><div class="info"><svg width="18" height="18" viewBox="0 0 18 18"><circle cx="8.9" cy="8.9" r="7.45" fill="none" stroke="#1f76b3" stroke-width="1.15"/><path d="M8.1 5.3 H9.1" stroke="#1f76b3" stroke-width="1.5" stroke-linecap="round"/><path d="M8.4 7.5 L8.6 10.6 Q8.8 12 9.9 12.6" fill="none" stroke="#1f76b3" stroke-width="1.2" stroke-linecap="round"/></svg></div><div class="c" style="left:80px;letter-spacing:0.2px">SK/24/001</div><div class="c" style="left:230px;letter-spacing:-0.25px">Správa železnic</div><div class="c" style="left:410px;letter-spacing:-0.2px">Zadavatel příručka</div><div class="c" style="left:580px;letter-spacing:-0.25px">Účelem je prokázání …</div><div class="c" style="left:880px;letter-spacing:-0.15px">10. 1. 2024 0:00</div><div class="c" style="left:1010px;letter-spacing:-0.15px">8. 11. 2026 0:00</div></div>
<div id="redbox"></div>
<div id="scroll"></div>
</body></html>
